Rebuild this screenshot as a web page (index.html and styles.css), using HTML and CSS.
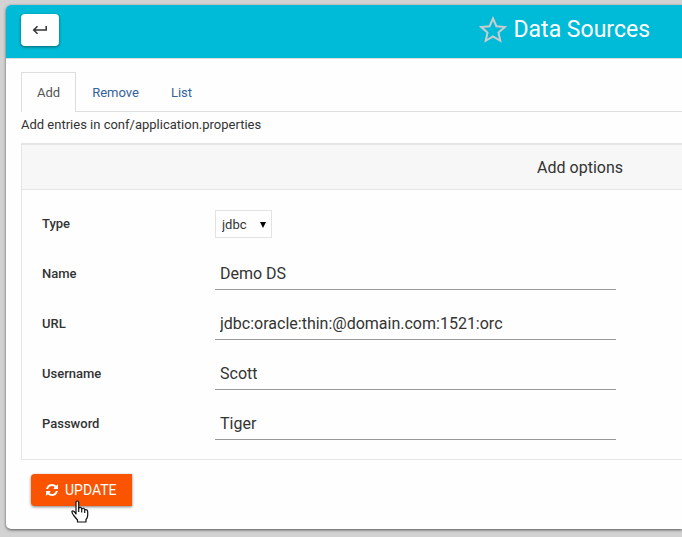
FILE: index.html
```html
<!DOCTYPE html>
<html lang="en">
<head>
<meta charset="utf-8">
<title>Data Sources</title>
<link rel="stylesheet" href="styles.css">
</head>
<body>
<main class="card">
  <header class="card-header">
    <button class="back" type="button" aria-label="Back">
      <svg width="16" height="12" viewBox="0 0 16 12" fill="none" stroke="#333" stroke-width="1.5"><path d="M14.2 2v4H2M5.500 2.200L1.700 6l3.800 3.800"/></svg>
    </button>
    <h1 class="title">
      <svg width="28" height="28" viewBox="0 0 28 28" fill="none" stroke="#ccc" stroke-width="2"><path d="M14 2.500l3.400 7.700 8.400.8-6.300 5.600 1.800 8.200L14 20.500l-7.300 4.300 1.800-8.200-6.300-5.600 8.400-.8z"/></svg>
      Data Sources
    </h1>
  </header>
  <div class="card-body">
    <nav class="tabs">
      <a class="tab tab-active" href="#add">Add</a>
      <a class="tab" href="#remove">Remove</a>
      <a class="tab" href="#list">List</a>
    </nav>
    <p class="hint">Add entries in conf/application.properties</p>
    <form>
      <section class="panel">
        <h2 class="panel-title">Add options</h2>
        <div class="fields">
          <div class="row row-select">
            <label for="type">Type</label>
            <div class="select-wrap">
              <select id="type"><option>jdbc</option></select>
              <svg class="arrow" width="6" height="6" viewBox="0 0 6 6"><path d="M0 0h6L3 6z"/></svg>
            </div>
          </div>
          <div class="row"><label for="name">Name</label><input id="name" type="text" value="Demo DS"></div>
          <div class="row"><label for="url">URL</label><input id="url" type="text" value="jdbc:oracle:thin:@domain.com:1521:orc"></div>
          <div class="row"><label for="username">Username</label><input id="username" type="text" value="Scott"></div>
          <div class="row"><label for="password">Password</label><input id="password" type="text" value="Tiger"></div>
        </div>
      </section>
      <button class="update" type="button">
        <svg width="12" height="12" viewBox="0 0 1536 1536" fill="#fff"><path d="M1511 928q0 5-1 7-64 268-268 434.500T764 1536q-146 0-282.500-55T238 1324l-129 129q-19 19-45 19t-45-19-19-45V960q0-26 19-45t45-19h448q26 0 45 19t19 45-19 45l-137 137q71 66 161 102t187 36q134 0 250-65t186-179q11-17 53-117 8-23 30-23h192q13 0 22.500 9.500t9.500 22.500zm25-800v448q0 26-19 45t-45 19h-448q-26 0-45-19t-19-45 19-45l138-138Q969 256 768 256q-134 0-250 65T332 500q-11 17-53 117-8 23-30 23H50q-13 0-22.500-9.500T18 608v-7q65-268 270-434.500T768 0q146 0 284 55.500T1297 212l130-129q19-19 45-19t45 19 19 45z"/></svg>
        UPDATE
        <svg class="pointer" width="18" height="23" viewBox="0 0 18 23" fill="#fff" stroke="#111" stroke-width="1.200" stroke-linejoin="round"><path d="M5 14V2.500Q5 1 6.300 1T7.700 2.500V8Q10.200 6.600 10.700 8.700 13.200 7.500 13.700 9.700 16.700 9 16.700 12V15.500Q16.700 17.500 15 19.500V22H6.500V20L2.700 15.500Q.600 12.500 1 11.200 2.500 10 5 14z"/><path d="M7.700 8v4M10.700 9v3.500M13.700 10v3"/></svg>
      </button>
    </form>
  </div>
</main>
</body>
</html>
```

FILE: styles.css
```css
* {
  box-sizing: border-box;
}

body {
  margin: 0;
  padding: 5px 0 8px 6px;
  background: #d2d2d2;
  color: #333;
  font: 13px/20px Roboto, "Liberation Sans", sans-serif;
}

input,
select,
button {
  font-family: inherit;
  color: inherit;
}

.card {
  background: #fefefe;
  border-radius: 5px 0 0 5px;
  box-shadow: 0 1px 3px rgba(0, 0, 0, 0.6);
}

.card-header {
  display: flex;
  align-items: center;
  justify-content: space-between;
  height: 53px;
  padding: 0 32px 3px 15px;
  background: #00bbd7;
  border-radius: 5px 0 0 0;
}

.back {
  display: flex;
  align-items: center;
  justify-content: center;
  width: 38px;
  height: 32px;
  padding: 0;
  border: 0;
  border-radius: 4px;
  background: #fff;
  box-shadow: 0 1px 3px rgba(0, 0, 0, 0.5);
}

.title {
  display: flex;
  align-items: center;
  gap: 7px;
  margin: 0;
  color: #fff;
  font-size: 23px;
  font-weight: 400;
  line-height: 32px;
}

.card-body {
  padding: 13px 0 23px 15px;
  border-top: 1px solid #ddd;
}

.tabs {
  display: flex;
  height: 40px;
  border-bottom: 1px solid #ddd;
}

.tab {
  padding: 11px 16px 8px;
  color: #336199;
  text-decoration: none;
}

.tab-active {
  height: 40px;
  padding: 10px 15px;
  border: 1px solid #ddd;
  border-bottom: 0;
  background: #fefefe;
  color: #555;
}

.hint {
  margin: 3px 0 8px;
}

.panel {
  border: 1px solid #e5e5e5;
  border-width: 2px 0 1px 1px;
}

.panel-title {
  margin: 0;
  padding: 13px 59px 11px 0;
  border-bottom: 1px solid #e5e5e5;
  background: #f7f7f7;
  font-size: 16px;
  font-weight: 400;
  text-align: right;
}

.fields {
  display: grid;
  gap: 16px;
  padding: 20px 66px 19px 20px;
}

.row {
  display: grid;
  grid-template-columns: 173px 1fr;
  align-items: center;
}

.row label {
  padding-top: 2px;
  font-weight: 500;
}

.row-select {
  align-items: start;
  height: 30px;
}

.row-select label {
  padding-top: 4px;
}

.row input {
  width: 100%;
  height: 34px;
  padding: 2px 5px 0;
  border: 0;
  border-bottom: 1px solid #999;
  border-radius: 0;
  background: transparent;
  font-size: 16px;
}

.select-wrap {
  position: relative;
  width: 57px;
  height: 28px;
}

.select-wrap select {
  appearance: none;
  width: 100%;
  height: 100%;
  padding: 0 6px;
  border: 1px solid #e3e3e3;
  border-radius: 0;
  background: #fefefe;
  font-size: 13px;
}

.arrow {
  position: absolute;
  top: 12px;
  right: 6px;
  pointer-events: none;
}

.update {
  position: relative;
  display: flex;
  align-items: center;
  gap: 7px;
  height: 32px;
  margin: 14px 0 0 10px;
  padding: 0 15px;
  border: 0;
  border-radius: 4px 0 0 4px;
  background: #fa5400;
  box-shadow: 0 1px 3px rgba(0, 0, 0, 0.5);
  color: #fff;
  font-size: 14px;
}

.pointer {
  position: absolute;
  left: 40px;
  top: 26px;
}
```
